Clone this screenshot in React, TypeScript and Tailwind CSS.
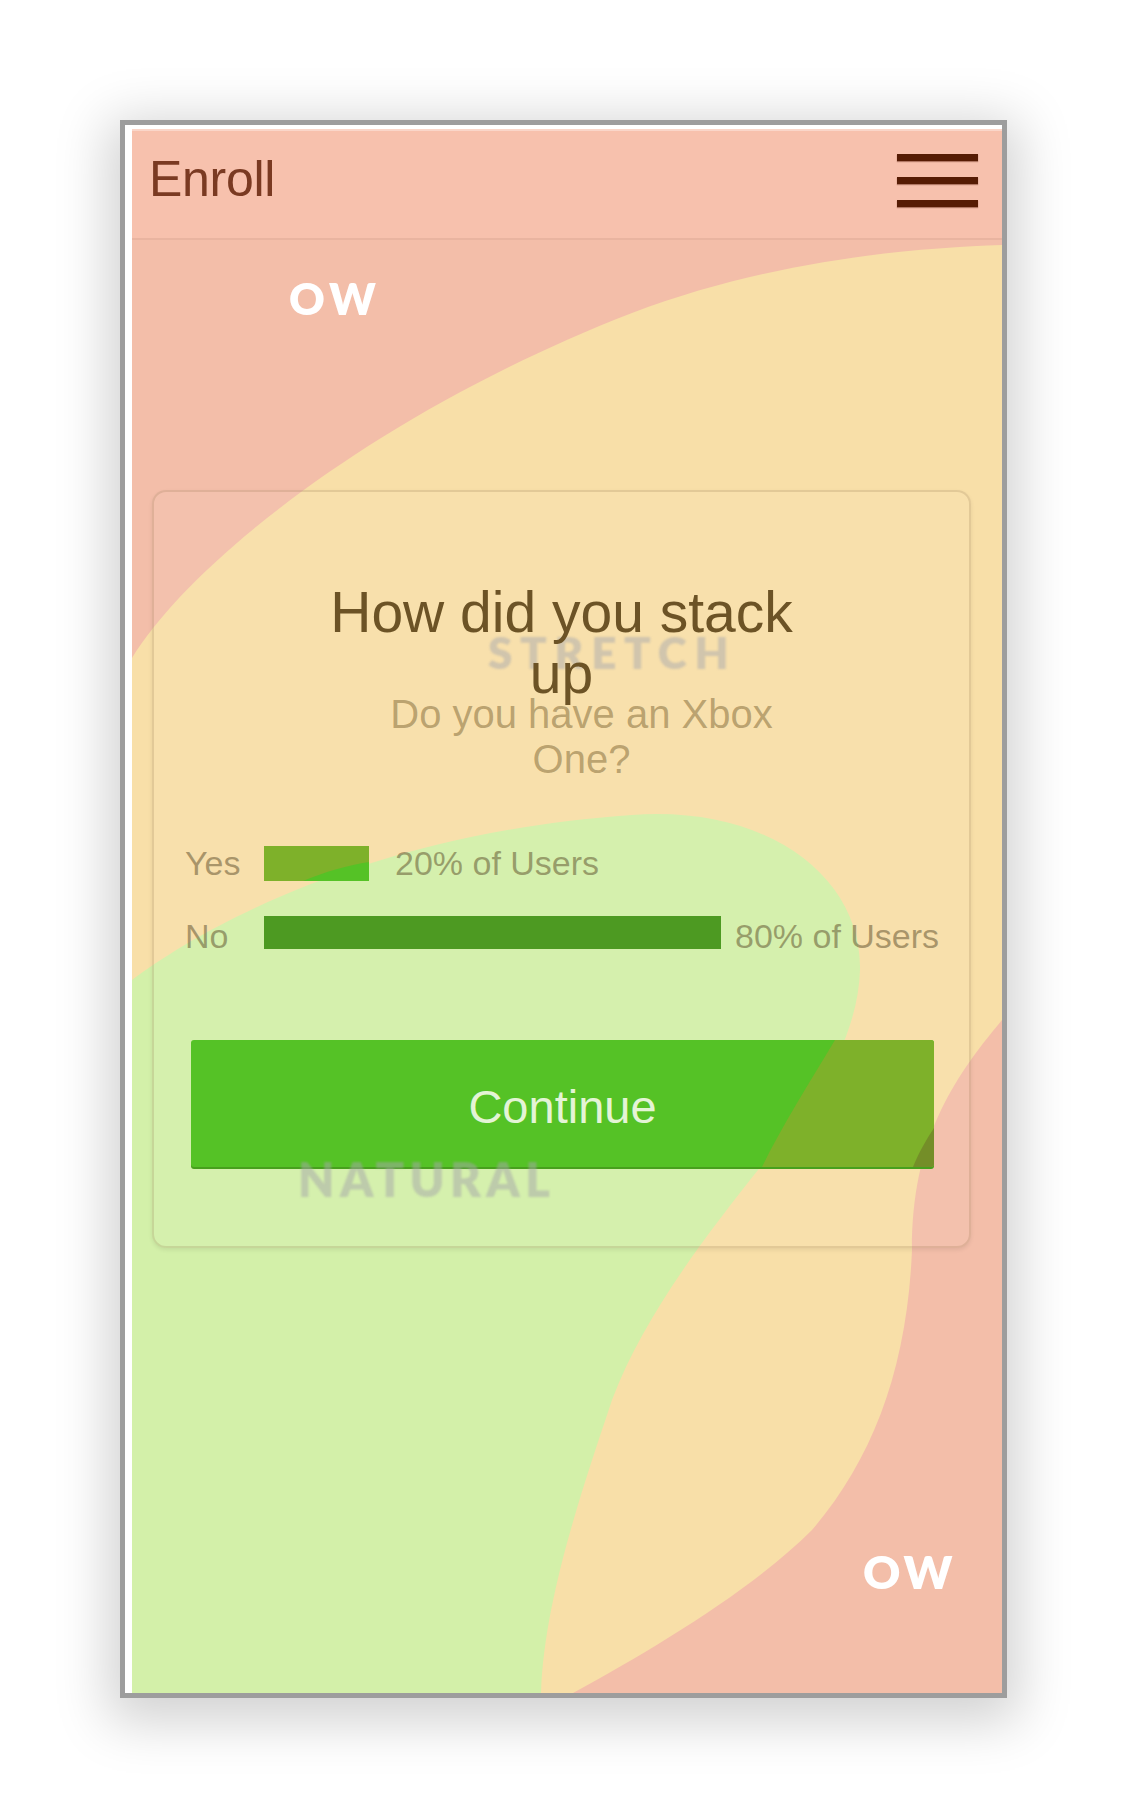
const sans = "font-['Liberation_Sans',Arial,sans-serif]";
const mark = "font-['Lato','Liberation_Sans',sans-serif] font-extrabold";

function Blobs() {
  return (
    <svg className="absolute inset-0" width="870" height="1453" viewBox="0 0 870 1453">
      <rect width="870" height="1453" fill="#f3bea9" />
      <path
        d="M0 418 C60 320 250 170 500 73 C640 20 780 8 870 5 L870 780 C820 840 780 900 780 1010 C775 1130 740 1220 680 1290 C620 1350 520 1410 441 1453 L0 1453 Z"
        fill="#f8dfa8"
      />
      <path
        d="M0 740 C80 680 250 592 500 575 C640 565 730 640 728 730 C726 800 680 870 630 925 C570 1000 510 1080 480 1160 C450 1250 412 1360 409 1453 L0 1453 Z"
        fill="#d3f0a9"
      />
    </svg>
  );
}

function ResultRow({ label, pct, gap, yes }: { label: string; pct: string; gap: string; yes?: boolean }) {
  const text = `text-[34px] leading-[35px] text-[rgba(90,75,40,0.5)] ${yes ? "" : "pt-[8px]"}`;
  return (
    <div className={`flex items-center pl-[31px] ${yes ? "h-[35px]" : "h-[33px]"}`}>
      <span className={`w-[79px] ${text}`}>{label}</span>
      {yes ? (
        <div className="relative h-[35px] w-[105px] bg-[#7eb12a]">
          <svg className="absolute inset-0" width="105" height="35" viewBox="0 0 105 35">
            <path d="M39 35 C60 26 85 19 105 16 L105 35 Z" fill="#55c226" />
          </svg>
        </div>
      ) : (
        <div className="h-[33px] w-[457px] bg-[#4d9a22]" />
      )}
      <span className={`${gap} ${text}`}>{pct}</span>
    </div>
  );
}

export default function App() {
  return (
    <div className={`h-[1818px] w-[1128px] bg-white pl-[120px] pt-[120px] ${sans}`}>
      <div className="w-[887px] border-[5px] border-[#9d9d9d] bg-white pl-[7px] pt-[4px] shadow-[0_12px_50px_12px_rgba(0,0,0,0.18)]">
        {/* header */}
        <header className="flex h-[111px] items-start justify-between border-b-2 border-t-2 border-b-[#e9b4a0] border-t-[#fad6c9] bg-[#f7c1ad] pl-[17px] pr-[24px]">
          <h1 className="pt-[23px] text-[50px] leading-[50px] tracking-[-0.3px] text-[#7a3a22]">Enroll</h1>
          <div className="flex flex-col gap-[16px] pt-[23px]">
            <span className="block h-[7px] w-[81px] bg-[#561c04] shadow-[0_1px_1px_rgba(90,30,10,0.45)]" />
            <span className="block h-[7px] w-[81px] bg-[#561c04] shadow-[0_1px_1px_rgba(90,30,10,0.45)]" />
            <span className="block h-[7px] w-[81px] bg-[#561c04] shadow-[0_1px_1px_rgba(90,30,10,0.45)]" />
          </div>
        </header>

        {/* body */}
        <main className="relative h-[1453px] w-[870px] overflow-hidden pt-[250px]">
          <Blobs />
          <div className={`absolute left-[157px] top-[36px] text-[44px] leading-[44px] tracking-[5px] text-white blur-[0.5px] ${mark}`}>OW</div>
          <div className={`absolute left-[356px] top-[390px] text-[44px] leading-[44px] tracking-[0.175em] text-[rgba(165,165,170,0.5)] blur-[0.8px] ${mark}`}>
            STRETCH
          </div>

          <section className="relative ml-[20px] w-[819px] rounded-[14px] border-2 border-[rgba(140,110,70,0.2)] bg-white/5 pb-[79px] pt-[90px] shadow-[0_2px_4px_rgba(0,0,0,0.08)]">
            <h2 className="mx-auto h-[122px] w-[500px] text-center text-[57px] leading-[61px] text-[#6c5326]">How did you stack up</h2>
            <div className="-mt-[12px] pl-[40px]">
              <p className="mx-auto w-[430px] text-center text-[40px] leading-[45px] text-[rgba(110,85,35,0.45)]">Do you have an Xbox One?</p>
            </div>

            <div className="mt-[64px] flex flex-col gap-[35px]">
              <ResultRow label="Yes" pct="20% of Users" gap="ml-[26px]" yes />
              <ResultRow label="No" pct="80% of Users" gap="ml-[14px]" />
            </div>

            <button className="relative ml-[37px] mt-[91px] flex h-[127px] w-[743px] items-center justify-center overflow-hidden rounded-[3px] bg-[#55c226] shadow-[0_2px_0_#47a01d]">
              <svg className="absolute inset-0" width="743" height="127" viewBox="0 0 743 127">
                <path d="M644 0 L743 0 L743 127 L571 127 C592 84 620 40 644 0 Z" fill="#7eb12a" />
                <path d="M743 88 L743 127 L722 127 C728 112 735 100 743 88 Z" fill="#748e28" />
              </svg>
              <span className="relative mt-[8px] text-[47px] text-[#e4f4d6]">Continue</span>
            </button>
          </section>

          <div className={`absolute left-[166px] top-[916px] text-[47px] leading-[47px] tracking-[0.115em] text-[rgba(165,165,170,0.5)] blur-[0.8px] ${mark}`}>
            NATURAL
          </div>
          <div className={`absolute left-[731px] top-[1309px] text-[46px] leading-[46px] tracking-[4px] text-white blur-[0.5px] ${mark}`}>OW</div>
        </main>
      </div>
    </div>
  );
}
